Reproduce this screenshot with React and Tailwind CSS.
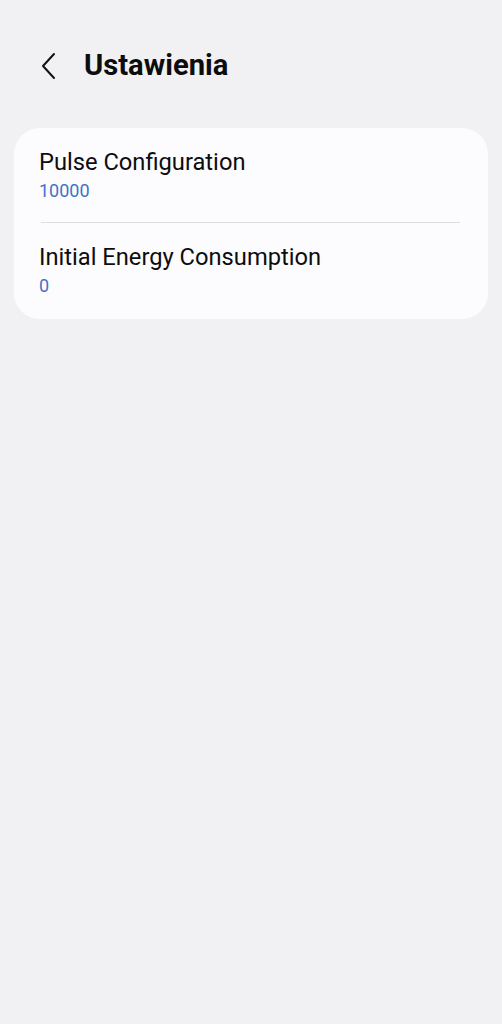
export default function App() {
    return (
        <div className="min-h-[1024px] w-full bg-[#f1f1f3] font-['Roboto',sans-serif]">
            <header className="flex items-center h-[134px] pl-[38px] pb-[2px]">
                <button className="w-[22px] h-[30px] flex items-center justify-center">
                    <svg width="18" height="28" viewBox="0 0 18 28" fill="none">
                        <path d="M14 2 L3 14 L14 26" stroke="#111" strokeWidth="2" strokeLinecap="round" strokeLinejoin="round" />
                    </svg>
                </button>
                <h1 className="ml-[24px] text-[29.2px] font-bold text-[#0d0d0d]">Ustawienia</h1>
            </header>

            <div className="mx-[14px] -mt-[6px] bg-[#fcfcfe] rounded-[26px] px-[25px]">
                <div className="pt-[19px] pb-[20px]">
                    <div className="text-[23.7px] leading-[30px] text-[#0d0d0d]">Pulse Configuration</div>
                    <div className="mt-[3px] text-[18px] leading-[22px] text-[#3f73c8]">10000</div>
                </div>
                <div className="h-px bg-[#dedee0] ml-[2px] mr-[3px]"></div>
                <div className="pt-[19px] pb-[22px]">
                    <div className="text-[23.7px] leading-[30px] text-[#0d0d0d]">Initial Energy Consumption</div>
                    <div className="mt-[3px] text-[18px] leading-[22px] text-[#3f73c8]">0</div>
                </div>
            </div>
        </div>
    );
}
